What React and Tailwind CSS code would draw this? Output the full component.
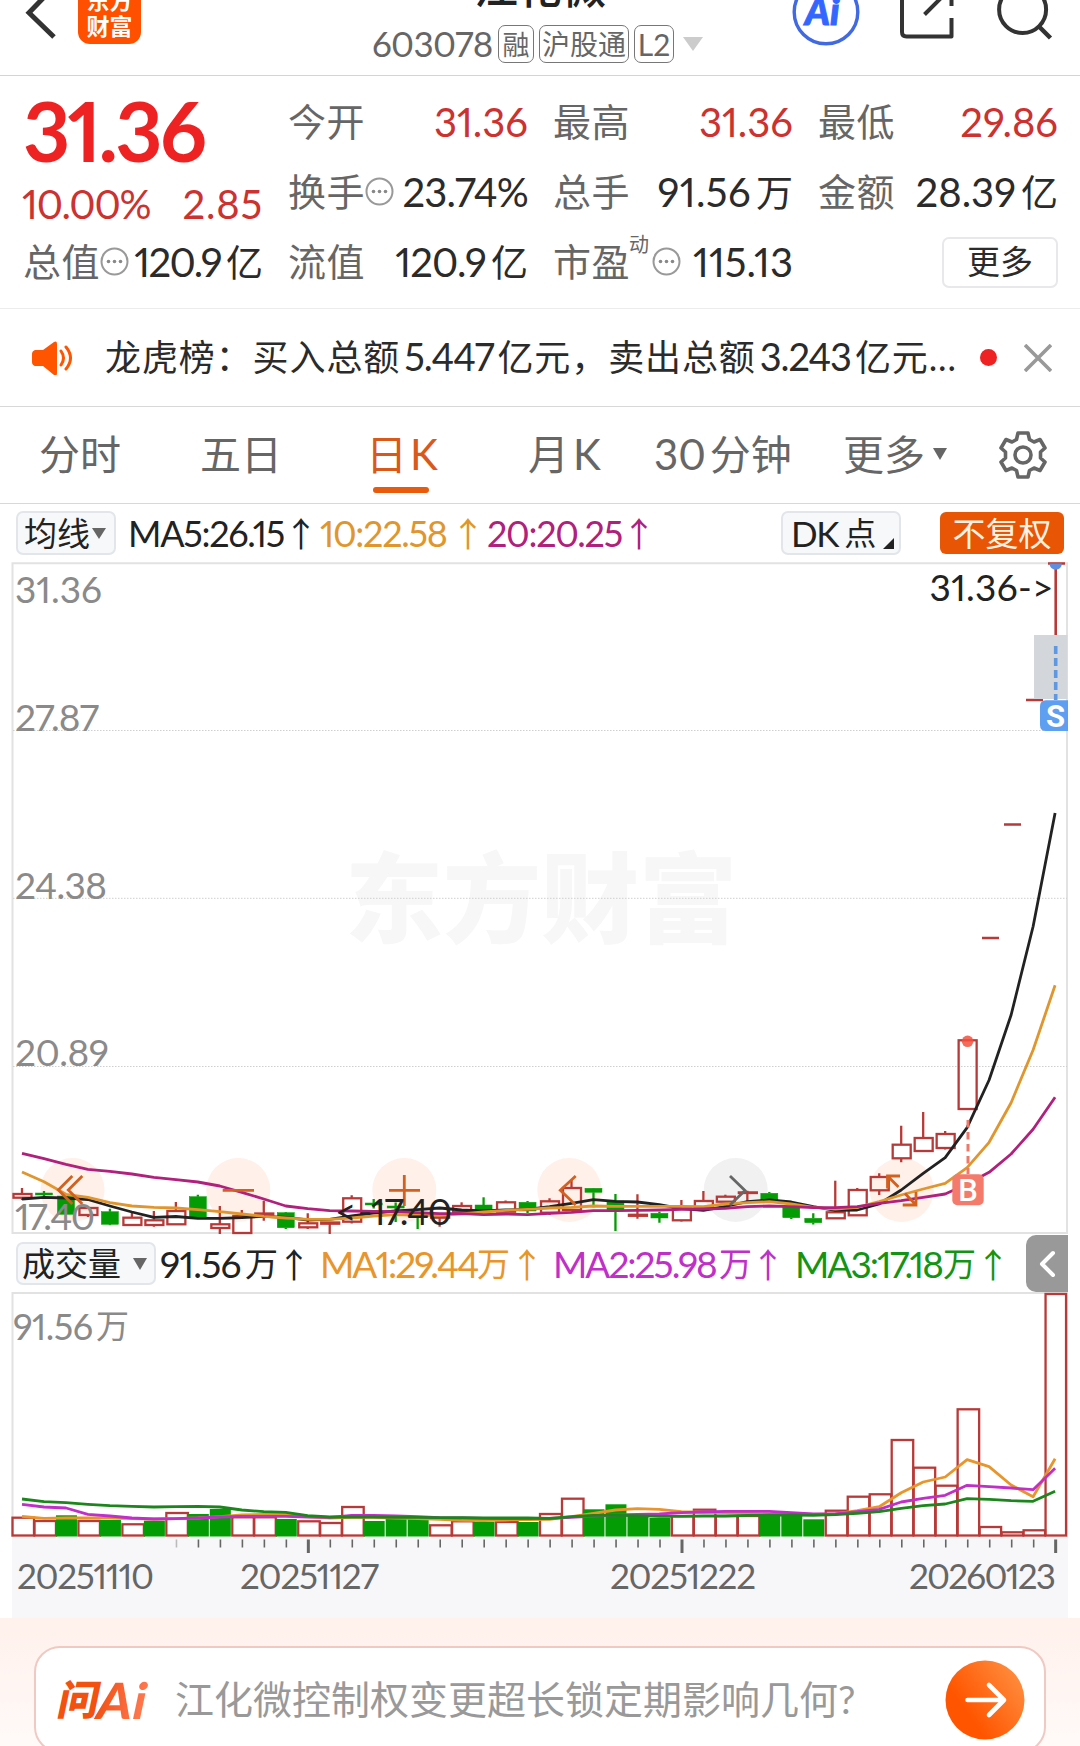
import React from 'react';

const X0 = 22;
const STEP = 21.98;
const cx = (i) => X0 + STEP * i;

// [isUp, bodyTop, bodyBottom, high, low]
const candles = [
    [1, 1194, 1197.7, 1188, 1200], [0, 1193, 1195, 1191, 1198], [0, 1196, 1214.3, 1196, 1214.3],
    [1, 1208, 1215, 1206, 1217], [0, 1211.7, 1224.3, 1208.7, 1225.3], [1, 1217.7, 1225, 1213, 1225],
    [1, 1220.3, 1225, 1211, 1226.7], [1, 1211, 1224.3, 1202, 1224.3], [0, 1196.7, 1217.3, 1194.7, 1218.3],
    [1, 1224.3, 1228, 1206, 1234], [1, 1216, 1233, 1210, 1233], [1, 1213.5, 1214.5, 1200.7, 1220.7],
    [0, 1212.7, 1227.7, 1212, 1229], [1, 1223.3, 1227.3, 1213.3, 1229], [1, 1222.5, 1223.7, 1222, 1234],
    [1, 1198.3, 1221.7, 1195.3, 1223.5], [0, 1203, 1205, 1199, 1208.5], [0, 1206, 1208, 1202.5, 1222],
    [0, 1213, 1215, 1213, 1229], [1, 1216, 1217.7, 1214, 1226.7], [1, 1206, 1212, 1202.3, 1212],
    [0, 1205, 1211, 1197.3, 1211], [1, 1202.3, 1211.7, 1200.5, 1211.7], [0, 1202.3, 1211, 1201, 1213],
    [1, 1201.3, 1212.7, 1198.3, 1215], [1, 1188, 1210, 1180, 1210], [0, 1188.3, 1192.3, 1188, 1207.3],
    [0, 1201, 1209.7, 1194, 1231], [1, 1214.8, 1215.8, 1194.3, 1218.7], [0, 1213.3, 1218, 1211.7, 1222.7],
    [1, 1208.3, 1220.3, 1200, 1221.5], [1, 1201, 1207.3, 1191, 1207.3], [1, 1196.7, 1201.7, 1194.7, 1201.7],
    [1, 1192.4, 1193, 1190.7, 1201.7], [0, 1193.3, 1200.7, 1192, 1200.7], [0, 1207.3, 1217.7, 1207, 1219],
    [0, 1218.3, 1222.7, 1213.3, 1224.5], [1, 1212.3, 1218.3, 1180.7, 1218.3], [1, 1190, 1215.3, 1188, 1215.3],
    [1, 1177, 1190.3, 1173.3, 1195], [1, 1144.7, 1158.3, 1125.7, 1162.3], [1, 1138, 1151, 1112, 1151],
    [1, 1134, 1148, 1131, 1149.5], [1, 1040.3, 1109, 1040.3, 1109],
];

const ma5 = [
    1199, 1197.3, 1198, 1199.5, 1206, 1212, 1217.3, 1216.5, 1218.3, 1218.3, 1217.7, 1216.3, 1217.3, 1220, 1219.3, 1216,
    1213, 1211, 1209.7, 1208, 1210, 1211, 1210, 1209.3, 1206.7, 1203.3, 1199.7, 1201.3, 1202, 1204.7, 1208.7, 1210.3,
    1206.5, 1201.7, 1200, 1202, 1206.7, 1210.3, 1210, 1204, 1190, 1173.3, 1157.7, 1127.7, 1080, 1015, 926.5, 813,
];
const ma10 = [
    1172, 1181.7, 1194.3, 1197.3, 1202.7, 1206, 1207.3, 1208, 1209.7, 1211.7, 1214, 1216.3, 1218, 1219.3, 1219.3, 1218,
    1216, 1214.7, 1215.3, 1215.3, 1214, 1212, 1210.3, 1209.3, 1208, 1207.3, 1206, 1206.3, 1206.3, 1206.3, 1206.3, 1206.7,
    1204, 1202.7, 1201.7, 1204, 1207.3, 1209, 1207.3, 1201.7, 1195, 1189, 1183.3, 1167.7, 1142.3, 1102.7, 1050, 985.3,
];
const ma20 = [
    1153.3, 1158.7, 1164.3, 1169.3, 1171.3, 1174, 1177.3, 1179.7, 1182, 1186, 1192.3, 1199, 1206, 1208.7, 1210.7, 1211,
    1211.3, 1211.7, 1212.7, 1213.7, 1213.7, 1214.7, 1214, 1214.7, 1213.3, 1212.3, 1210.7, 1210.7, 1210.3, 1210, 1209.3, 1209,
    1208.3, 1206.7, 1206, 1206.7, 1207.7, 1207.7, 1206.7, 1203.3, 1200.7, 1197.3, 1194, 1184, 1172.3, 1154, 1129.3, 1097.3,
];

// [isUp, top]
const volumes = [
    [1, 1517.7], [1, 1521], [0, 1515.3], [1, 1521], [0, 1520], [1, 1524.3], [0, 1520.7], [1, 1513], [0, 1514], [0, 1509],
    [1, 1517.3], [1, 1517.3], [0, 1519], [1, 1521.3], [1, 1523], [1, 1507], [0, 1521], [0, 1519], [0, 1519], [1, 1525.3],
    [1, 1521.3], [0, 1522], [1, 1522], [0, 1522], [1, 1514], [1, 1498.7], [0, 1509.3], [0, 1504.3], [0, 1516], [0, 1518],
    [1, 1516], [1, 1509.7], [1, 1516], [1, 1516], [0, 1515.3], [0, 1516], [0, 1519.3], [1, 1510.7], [1, 1496.7], [1, 1494.3],
    [1, 1440], [1, 1467.7], [1, 1485.7], [1, 1409.3], [1, 1527], [1, 1532.3], [1, 1530.3], [1, 1294],
];
const vol1 = [
    1516.3, 1518.3, 1518, 1518, 1518, 1518.7, 1519, 1518.7, 1518, 1516.7, 1515, 1514.3, 1514.7, 1516.7, 1518, 1517.3,
    1517.3, 1518, 1518.7, 1519.3, 1520.3, 1520.7, 1520, 1519.7, 1519.3, 1516.7, 1513.3, 1510, 1508.7, 1509.3, 1511.7, 1512.3,
    1512.7, 1513.3, 1514, 1514, 1514.3, 1514, 1510.7, 1506.7, 1492.7, 1482, 1477, 1459.7, 1466.7, 1485, 1496.7, 1458.7,
];
const vol2 = [
    1504.3, 1507, 1508, 1514.3, 1516, 1518, 1519, 1518.7, 1518, 1517, 1516.3, 1516.3, 1516.3, 1517, 1517.3, 1515.3,
    1515.3, 1516, 1516.7, 1517.7, 1518, 1518.3, 1518.7, 1518.7, 1518.3, 1517.3, 1516, 1515, 1514.3, 1514, 1512.7, 1512,
    1511.3, 1511.3, 1511.3, 1512.7, 1514, 1514, 1511.7, 1509.3, 1502, 1498.3, 1495.3, 1485.3, 1486.7, 1488, 1489.7, 1468.3,
];
const vol3 = [
    1499, 1501.7, 1502.7, 1504.3, 1505.7, 1506.3, 1507, 1506.7, 1506.3, 1507, 1510, 1511.7, 1512.3, 1515.7, 1517, 1517,
    1517, 1517.3, 1517.3, 1517.7, 1517.7, 1518, 1518, 1518, 1518.3, 1516.7, 1515.3, 1515.3, 1515.7, 1516.3, 1516.3, 1516,
    1516, 1515.3, 1515, 1515, 1515.3, 1514.7, 1513.3, 1511.7, 1508.3, 1505.7, 1504, 1498.7, 1499.3, 1500.7, 1501.3, 1491.3,
];

const toPoints = (arr) => arr.map((y, i) => `${cx(i).toFixed(1)},${y}`).join(' ');

const RED = '#b83a38';
const GREEN = '#049c04';

function Line({ data, color }) {
    return <polyline points={toPoints(data)} fill="none" stroke={color} strokeWidth="2.8" strokeLinejoin="round" />;
}

function Dots() {
    return (
        <svg className="-mt-[2px] h-[29px] w-[29px] shrink-0" viewBox="0 0 29 29">
            <circle cx="14.5" cy="14.5" r="13" fill="none" stroke="#999" strokeWidth="2" />
            <circle cx="8.5" cy="14.5" r="1.8" fill="#888" />
            <circle cx="14.5" cy="14.5" r="1.8" fill="#888" />
            <circle cx="20.5" cy="14.5" r="1.8" fill="#888" />
        </svg>
    );
}

function Down({ className }) {
    return (
        <svg className={className} viewBox="0 0 14 12" preserveAspectRatio="none">
            <path d="M0 0h14L7 12z" fill="currentColor" />
        </svg>
    );
}

function Cell({ label, children, dots, sup, color = 'text-[#2b2b2b]', track = 'tracking-normal' }) {
    return (
        <div className="flex h-[70px] items-center">
            <span className="-mt-[2px] shrink-0 text-[38px] tracking-[0.5px] text-[#666]">{label}</span>
            {sup && <span className="-ml-px mb-[36px] w-[23px] shrink-0 text-[20px] text-[#666]">{sup}</span>}
            {dots && <Dots />}
            <span className={`ml-auto whitespace-nowrap text-[40px] ${color} ${track}`}>{children}</span>
        </div>
    );
}

function Unit({ children }) {
    return <span className="ml-[5px] text-[37px] tracking-normal">{children}</span>;
}

function Header() {
    return (
        <header className="flex h-[76px] items-start overflow-hidden border-b border-[#d4d4d4]">
            <svg className="ml-[20px] h-[50px] w-[40px]" viewBox="20 0 40 50">
                <path d="M54-13 29 12.700 54 37" fill="none" stroke="#333" strokeWidth="5" />
            </svg>
            <div className="-mt-[19px] ml-[18px] flex h-[63px] w-[63px] flex-col items-center justify-center rounded-[12px] bg-[#ff4f00] text-[23px] font-bold leading-[26px] text-white">
                <span>东方</span>
                <span>财富</span>
            </div>
            <div className="-mt-[38px] ml-[231px] flex w-[331px] flex-col">
                <div className="ml-[102px] h-[56px] text-[44px] font-medium leading-[51px] text-[#222]">江化微</div>
                <div className="mt-[7px] flex h-[38px] items-center text-[#666]">
                    <span className="-mt-[2px] w-[126px] text-[35px] tracking-[-0.7px]">603078</span>
                    <span className="flex h-[38px] w-[36px] items-center justify-center rounded-[7px] border border-[#777] text-[27px]">融</span>
                    <span className="ml-[5px] flex h-[38px] w-[90px] items-center justify-center rounded-[7px] border border-[#777] text-[28px]">沪股通</span>
                    <span className="ml-[5px] flex h-[38px] w-[40px] items-center justify-center rounded-[7px] border border-[#777] text-[30px]">L2</span>
                    <Down className="ml-[9px] h-[14px] w-[20px] text-[#ccc]" />
                </div>
            </div>
            <svg className="ml-[87px] h-[50px] w-[270px]" viewBox="790 0 270 50">
                <circle cx="826" cy="12" r="31.800" fill="none" stroke="#4169e1" strokeWidth="3.400" />
                <text x="805" y="25" fontFamily="Lato" fontSize="38" fontWeight="900" fontStyle="italic" fill="#3366ff" stroke="#3366ff" strokeWidth="1">Ai</text>
                <path d="M902-10V32q0 4.500 4.500 4.500H951.500V18M951.500 6V-10M924.500 14.500 945-6" fill="none" stroke="#333" strokeWidth="4" strokeLinejoin="round" />
                <circle cx="1022.600" cy="9.500" r="23.500" fill="none" stroke="#333" strokeWidth="4" />
                <path d="M1039 26.500 1050.500 38" stroke="#333" strokeWidth="4.500" />
            </svg>
        </header>
    );
}

function Quote() {
    return (
        <section className="flex h-[233px] gap-[25px] border-b border-[#ececec] pl-[23px] pt-[11px]">
            <div className="w-[240px]">
                <div className="flex h-[86px] items-center text-[82px] font-bold tracking-[-2.8px] text-[#ee2222]">31.36</div>
                <div className="mt-[7px] flex h-[47px] items-center justify-between whitespace-nowrap text-[40px] text-[#cc3230]">
                    <span className="-ml-px tracking-[-1.2px]">10.00%</span>
                    <span className="tracking-[0.8px]">2.85</span>
                </div>
                <Cell label="总值" dots track="tracking-[-1.7px]">120.9<Unit>亿</Unit></Cell>
            </div>
            <div className="w-[240px]">
                <Cell label="今开" color="text-[#cc3230]">31.36</Cell>
                <Cell label="换手" dots track="tracking-[-0.8px]">23.74%</Cell>
                <Cell label="流值" track="tracking-[-0.9px]">120.9<Unit>亿</Unit></Cell>
            </div>
            <div className="w-[240px]">
                <Cell label="最高" color="text-[#cc3230]">31.36</Cell>
                <Cell label="总手" track="tracking-[0.4px]">91.56<Unit>万</Unit></Cell>
                <Cell label="市盈" sup="动" dots>115.13</Cell>
            </div>
            <div className="w-[240px]">
                <Cell label="最低" color="text-[#cc3230]">29.86</Cell>
                <Cell label="金额">28.39<Unit>亿</Unit></Cell>
                <div className="flex h-[70px] items-center justify-end">
                    <button className="h-[51px] w-[116px] rounded-[7px] border-2 border-[#e8e8ea] pb-[2px] text-[33px] text-[#2b2b2b]">更多</button>
                </div>
            </div>
        </section>
    );
}

function News() {
    return (
        <section className="flex h-[98px] items-center border-b border-[#d8d8d8] pl-[31px]">
            <svg className="h-[34px] w-[43px]" viewBox="31 340 43 34">
                <path d="M35 349h8l11-8q3-1.500 3 2v29q0 3.500-3 2l-11-9h-8q-3-1-3-4v-8q0-3 3-4z" fill="#ff5500" />
                <path d="M61 350q5 7 0 14M66 346q9 11 0 22" fill="none" stroke="#ff5500" strokeWidth="3" strokeLinecap="round" />
            </svg>
            <span className="-mt-[3px] ml-[31px] w-[860px] whitespace-nowrap text-[36px] tracking-[0.9px] text-[#2b2b2b]">
                龙虎榜：买入总额<span className="px-[4px] text-[38px] tracking-[-1.1px]">5.447</span>亿元，卖出总额<span className="px-[4px] text-[38px] tracking-[-1.1px]">3.243</span>亿元...
            </span>
            <span className="ml-[15px] h-[17px] w-[17px] rounded-full bg-[#ee2222]" />
            <svg className="ml-[27px] h-[28px] w-[28px]" viewBox="0 0 28 28">
                <path d="M1 1 27 27M27 1 1 27" stroke="#999" strokeWidth="3.600" />
            </svg>
        </section>
    );
}

function Tabs() {
    return (
        <nav className="flex h-[97px] items-center border-b border-[#d8d8d8] pb-[2px] text-[41px] text-[#666]">
            <span className="ml-[39px] w-[161px]">分时</span>
            <span className="w-[166px]">五日</span>
            <div className="relative w-[162px] text-[#d9591a]">
                日<span className="pl-[3px] text-[42px]">K</span>
                <span className="absolute -bottom-[18px] left-[7px] h-[6px] w-[56px] rounded-full bg-[#e85a0c]" />
            </div>
            <span className="w-[126px]">月<span className="pl-[4px] text-[42px]">K</span></span>
            <span className="w-[189px]"><span className="pr-[4px] text-[42px]">30</span>分钟</span>
            <span className="w-[90px]">更多</span>
            <Down className="h-[12px] w-[14px]" />
            <svg className="ml-[51px] mt-[2px] h-[50px] w-[50px]" viewBox="-25 -25 50 50" fill="none" stroke="#666" strokeWidth="3.600" strokeLinejoin="round">
                <path d="M-5-22H5L6.500-15.500 11-13 17-15.500 22-7 17.500-3V3L22 7 17 15.500 11 13 6.500 15.500 5 22H-5L-6.500 15.500-11 13-17 15.500-22 7-17.500 3V-3L-22-7-17-15.500-11-13-6.500-15.500Z" />
                <circle r="8" />
            </svg>
        </nav>
    );
}

function Up({ className }) {
    return <span className={`w-[34px] text-center font-['Noto_Sans_CJK_SC'] text-[34px] leading-none tracking-normal ${className}`}>↑</span>;
}

function MaBar() {
    return (
        <div className="flex h-[58px] items-center whitespace-nowrap pl-4 text-[36px] tracking-[-1.3px]">
            <button className="flex h-[44px] w-[100px] items-center rounded-[7px] border-2 border-[#e2e5ea] bg-[#f7f8fa] pl-[6px] text-[33px] tracking-normal text-[#222]">
                均线<Down className="ml-[2px] h-[11px] w-[14px] text-[#666]" />
            </button>
            <div className="ml-[12px] flex w-[192px] items-center text-[#222]">
                <span className="w-[156px]">MA5:26.15</span><Up />
            </div>
            <div className="flex w-[167px] items-center text-[#e0962c]">
                <span className="w-[131px]">10:22.58</span><Up />
            </div>
            <div className="flex w-[294px] items-center text-[#b0207c]">
                <span className="w-[135px]">20:20.25</span><Up />
            </div>
            <button className="flex h-[44px] w-[120px] items-center rounded-[7px] border-2 border-[#e2e5ea] bg-[#f7f8fa] pl-[8px] text-[35px] text-[#222]">
                DK<span className="pl-[6px] text-[32px] tracking-normal">点</span>
                <svg className="ml-[7px] mt-[20px] h-[11px] w-[11px]" viewBox="0 0 11 11"><path d="M11 0v11H0z" fill="#222" /></svg>
            </button>
            <button className="ml-[39px] h-[42px] w-[124px] rounded-[6px] bg-[#e85504] text-[33px] leading-[40px] tracking-normal text-[#fff3e4]">不复权</button>
        </div>
    );
}

function PriceChart() {
    return (
        <svg className="block h-[673px] w-[1080px]" viewBox="0 562 1080 673" fontFamily="Lato" fontSize="37">
            <text x="345" y="935" fontFamily="Noto Sans CJK SC" fontWeight="900" fontSize="98" fill="#f7f7f7" textLength="392" lengthAdjust="spacingAndGlyphs">东方财富</text>
            <path d="M12.500 563.300H1067V1233H12.500Z" fill="none" stroke="#e2e2e2" strokeWidth="2" />
            <path d="M13 730.500H1067M13 898.300H1067M13 1066.500H1067" stroke="#cfcfcf" strokeWidth="1" strokeDasharray="1.500 1.500" />

            {[72.5, 238.3, 404.3, 569.3, 901.7].map((x) => <circle key={x} cx={x} cy="1190" r="32" fill="#fff0ea" />)}
            <circle cx="735.700" cy="1190" r="32" fill="#f1f1f1" />

            {candles.map(([up, top, bottom, high, low], i) => {
                const color = up ? RED : GREEN;
                const h = bottom - top;
                return (
                    <g key={i} stroke={color} strokeWidth="2.300">
                        <path d={`M${cx(i)} ${high}V${top}M${cx(i)} ${bottom}V${low}`} />
                        {up
                            ? <rect x={cx(i) - 8.5} y={top} width="18" height={h} fill="none" />
                            : <rect x={cx(i) - 8.5} y={top} width="17" height={h} fill={color} strokeWidth="0.500" />}
                    </g>
                );
            })}
            <path d="M982 938H999M1004 824.500H1021M1026 700H1043M1048 563.500H1065M1055.700 563V635" stroke={RED} strokeWidth="2.600" />

            <rect x="1034" y="635" width="33.500" height="64" fill="#d3d6db" />
            <path d="M1055.700 646V700" stroke="#5f97e0" strokeWidth="3.600" strokeDasharray="8 4" />
            <path d="M1049.500 563.500a6.200 6.200 0 0 0 12.400 0z" fill="#5f8fe0" />

            <Line data={ma5} color="#222" />
            <Line data={ma10} color="#e0962c" />
            <Line data={ma20} color="#b0207c" />

            <g fill="none" stroke="#d4601e" strokeWidth="2.800">
                <path d="M72.300 1176 58.300 1190 72.300 1204M82.300 1176 68.300 1190 82.300 1204" />
                <path d="M222.700 1190.300H254M389 1190.300H420M404.300 1175V1206" />
                <path d="M575.700 1176 560.300 1190.300 575.700 1205" />
                <path d="M900 1176H887.500V1188.500M887.500 1176 898.500 1187M902.700 1205H916V1192M916 1205 905 1193.500" />
                <path d="M730 1176 745 1190.500 730 1205" stroke="#666" />
            </g>

            <circle cx="967.600" cy="1041.300" r="5.800" fill="#f2503e" fillOpacity="0.850" />
            <path d="M968 1120V1174" stroke="#f07868" strokeWidth="3" strokeDasharray="7.500 4.500" />
            <rect x="952.300" y="1174.300" width="31.400" height="31" rx="5" fill="#f47b6c" />
            <text x="968" y="1200.500" fontFamily="Roboto" fontSize="31" fontWeight="500" fill="#fff" textAnchor="middle">B</text>
            <path d="M1068 700.300H1046q-6 0-6 6V725q0 6 6 6H1068z" fill="#5f9ff2" />
            <text x="1055.500" y="727" fontFamily="Roboto" fontSize="31" fontWeight="700" fill="#fff" textAnchor="middle">S</text>

            <g fill="#8a8a8a">
                <text x="15" y="602.500" textLength="87">31.36</text>
                <text x="15" y="730.500" textLength="84">27.87</text>
                <text x="15" y="898.500" textLength="92">24.38</text>
                <text x="15" y="1065.500" textLength="94">20.89</text>
                <text x="15" y="1230" textLength="80">17.40</text>
            </g>
            <text x="929.500" y="601" fill="#222" textLength="124">31.36-&gt;</text>
            <text x="335" y="1225" fill="#222" textLength="37">&lt;-</text>
            <text x="371" y="1225" fill="#222" textLength="81">17.40</text>
        </svg>
    );
}

function VolumeBar() {
    return (
        <div className="flex h-[57px] items-center whitespace-nowrap pl-[16px] text-[37px] tracking-[-2px]">
            <button className="flex h-[43px] w-[140px] items-center rounded-[7px] border-2 border-[#e2e5ea] bg-[#f7f8fa] pl-[4px] text-[33px] tracking-normal text-[#222]">
                成交量<Down className="ml-[12px] h-[12px] w-[14px] text-[#666]" />
            </button>
            <div className="ml-[4px] flex w-[160px] items-center text-[#222]">
                <span className="w-[85px] tracking-[-0.8px]">91.56</span>
                <span className="w-[32px] text-[33px]">万</span>
                <Up />
            </div>
            <div className="flex w-[233px] items-center text-[#e8952a]">
                <span className="w-[157px]">MA1:29.44</span>
                <span className="w-[33px] text-[33px]">万</span>
                <Up />
            </div>
            <div className="flex w-[242px] items-center text-[#c030c8]">
                <span className="w-[166px]">MA2:25.98</span>
                <span className="w-[32px] text-[33px]">万</span>
                <Up />
            </div>
            <div className="flex w-[231px] items-center text-[#149414]">
                <span className="w-[148px]">MA3:17.18</span>
                <span className="w-[33px] text-[33px]">万</span>
                <Up />
            </div>
            <button className="flex h-[57px] w-[42px] items-center justify-center rounded-l-[10px] bg-[#999]">
                <svg className="ml-[2px] h-[28px] w-[18px]" viewBox="0 0 18 28"><path d="M14 3 3 14 14 25" fill="none" stroke="#fff" strokeWidth="4" strokeLinecap="round" strokeLinejoin="round" /></svg>
            </button>
        </div>
    );
}

function VolumeChart() {
    return (
        <svg className="block h-[326px] w-[1080px]" viewBox="0 1292 1080 326" fontFamily="Lato" fontSize="36">
            <rect x="12" y="1537" width="1056" height="81" fill="#f7f7fa" />
            <path d="M12.500 1537V1293H1067V1537" fill="none" stroke="#e2e2e2" strokeWidth="2" />
            <text x="13" y="1339.500" fill="#8a8a8a" textLength="80">91.56</text>
            <text x="96" y="1338" fill="#8a8a8a" fontFamily="Noto Sans CJK SC" fontSize="33">万</text>

            {volumes.map(([up, top], i) => (
                up
                    ? <rect key={i} x={cx(i) - 9.5} y={top} width={i === 47 ? 20.5 : 21.5} height={1535.5 - top} fill="none" stroke={RED} strokeWidth="2.300" />
                    : <rect key={i} x={cx(i) - 10} y={top} width="21" height={1536.5 - top} fill={GREEN} />
            ))}
            <Line data={vol1} color="#e8952a" />
            <Line data={vol2} color="#c030c8" />
            <Line data={vol3} color="#1c861c" />

            {volumes.map((_, i) => {
                if (i < 7) return null;
                const major = i === 13 || i === 30 || i === 47;
                return <path key={i} d={`M${cx(i) + 0.6} 1539.500V${major ? 1553 : 1547.5}`} stroke={i === 7 ? '#bbb' : '#666'} strokeWidth={major ? 3 : 1.6} />;
            })}
            <g fill="#666" fontSize="35">
                <text x="17" y="1589" textLength="137">20251110</text>
                <text x="240" y="1589" textLength="139">20251127</text>
                <text x="610" y="1589" textLength="146">20251222</text>
                <text x="909" y="1589" textLength="147">20260123</text>
            </g>
        </svg>
    );
}

function AskBar() {
    return (
        <footer className="h-[128px] overflow-hidden bg-linear-to-b from-[#fff1ec] to-[#fffaf8] px-[34px] pt-[28px]">
            <div className="flex h-[107px] items-center rounded-[26px] border-2 border-[#efc9c2] bg-white pl-[19px]">
                <div className="flex w-[120px] -skew-x-12 items-center pl-[4px] font-black leading-[50px]">
                    <span className="w-[39px] text-[41px] text-[#f2510f]">问</span>
                    <span className="bg-linear-to-r from-[#f2510f] to-[#ff7a50] bg-clip-text text-[50px] tracking-[1px] text-transparent">Ai</span>
                </div>
                <span className="w-[770px] whitespace-nowrap text-[39px] text-[#999]">江化微控制权变更超长锁定期影响几何?</span>
                <svg className="h-[80px] w-[80px]" viewBox="0 0 80 80">
                    <defs>
                        <linearGradient id="go" x1="0.300" y1="0.700" x2="1" y2="0.200">
                            <stop offset="0" stopColor="#ff5500" />
                            <stop offset="1" stopColor="#ff8f40" />
                        </linearGradient>
                    </defs>
                    <circle cx="40" cy="40" r="39.500" fill="url(#go)" />
                    <path d="M22.500 40H58M44 25 59 40 44 55" fill="none" stroke="#fff" strokeWidth="4.600" strokeLinecap="round" strokeLinejoin="round" />
                </svg>
            </div>
        </footer>
    );
}

function App() {
    return (
        <div className="h-[1746px] w-[1080px] overflow-hidden bg-white font-['Lato','Noto_Sans_CJK_SC',sans-serif] leading-none proportional-nums">
            <Header />
            <Quote />
            <News />
            <Tabs />
            <MaBar />
            <PriceChart />
            <VolumeBar />
            <VolumeChart />
            <AskBar />
        </div>
    );
}

export default App;
